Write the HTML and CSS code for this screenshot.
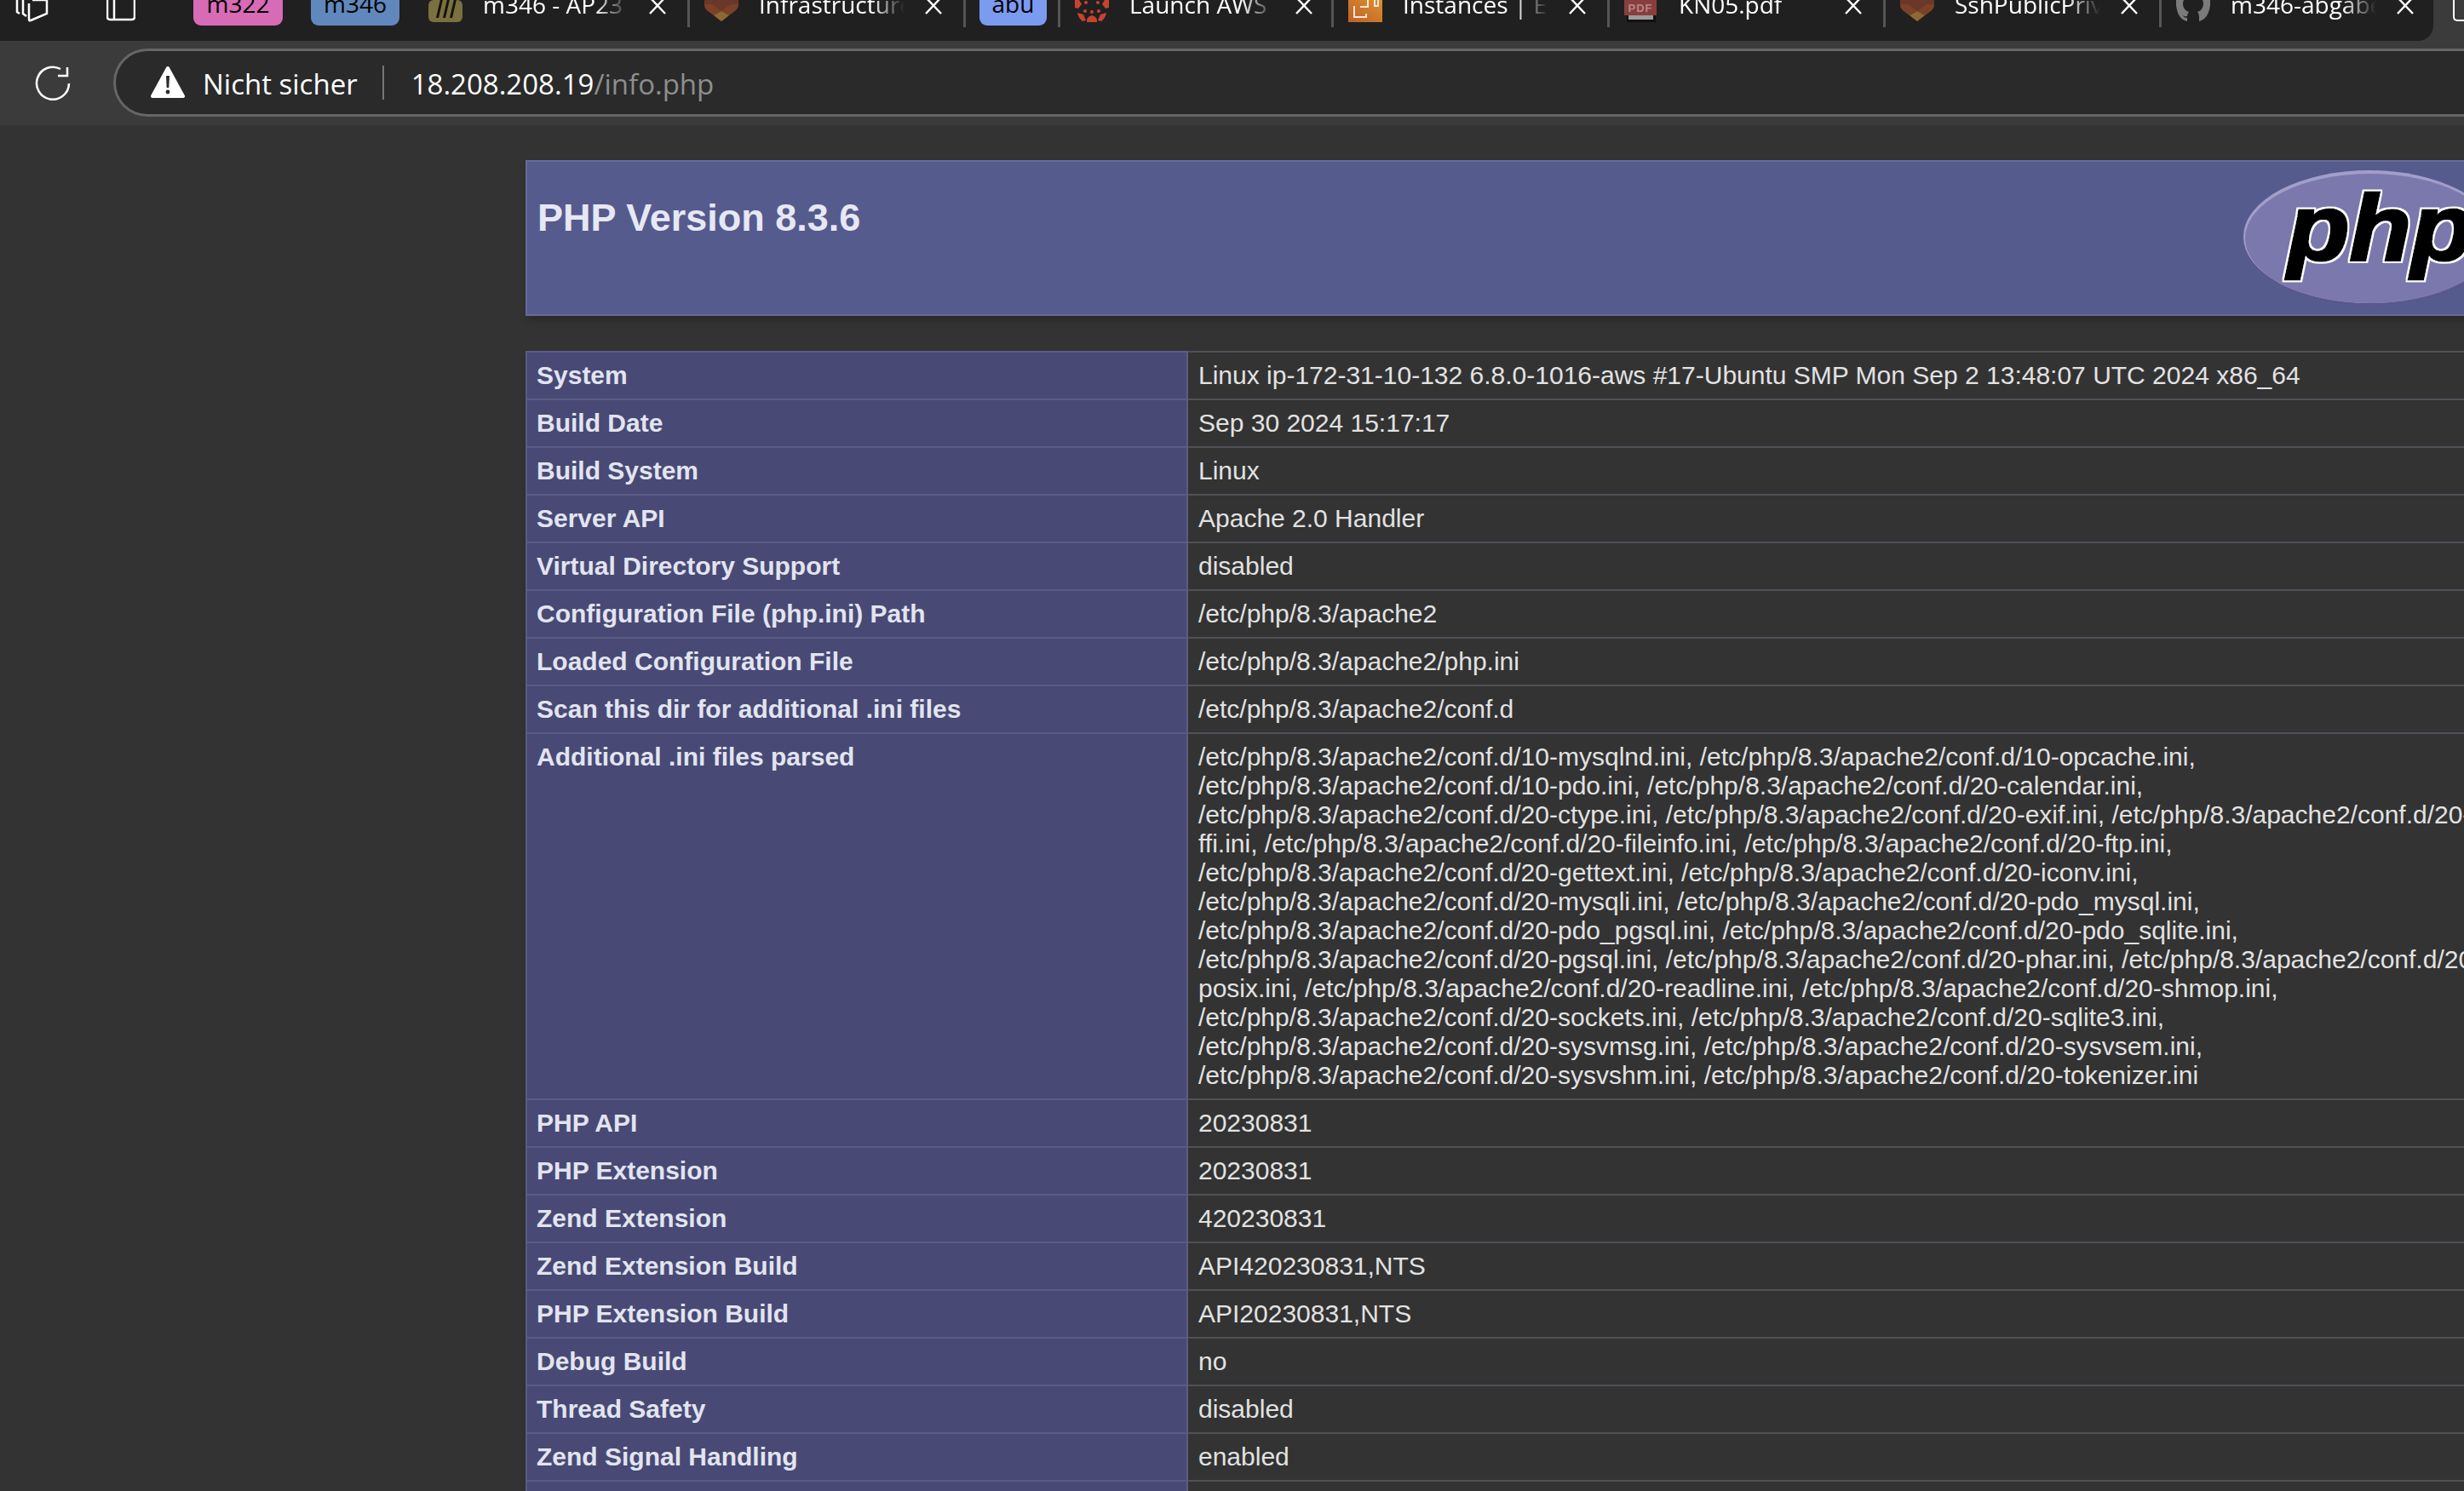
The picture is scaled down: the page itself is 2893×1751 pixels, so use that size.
FILE: index.html
```html
<!DOCTYPE html>
<html lang="de">
<head>
  <meta charset="UTF-8">
  <title>phpinfo()</title>
  <link rel="stylesheet" href="styles.css">
</head>
<body>
  <div class="topbar">
    <div class="tabstrip">
      <svg class="strip-icon icon-workspaces" viewBox="0 0 40 26"><path d="M3 0v14l3 2M10 0v16l4 3M21 0h17v16l-19 8q-2 1-2-2V4"/></svg>
      <svg class="strip-icon icon-vertical" viewBox="0 0 34 26"><path d="M1 0v20q0 3 3 3h26q3 0 3-3V0M9 0v23"/></svg>
      <div class="pin pin-pink">m322</div>
      <div class="pin pin-blue">m346</div>

      <div class="tab">
        <svg class="favicon" viewBox="0 0 40 26"><rect width="40" height="26" y="0" rx="6" fill="#7a7040"/><path d="M9 21l6-26h3l-6 26zM17 21l6-26h3l-6 26zM25 21l6-26h3l-6 26z" fill="#15140c"/></svg>
        <span class="tab-title">m346 - AP23</span>
        <svg class="tab-close" viewBox="0 0 20 20"><path d="M1 0l18 19M19 0L1 19"/></svg>
      </div>
      <div class="tab">
        <svg class="favicon" viewBox="0 0 40 26"><path d="M0 0h40v5q0 4-3 7L20 25 3 12Q0 9 0 5z" fill="#6b3729"/><path d="M20 13l9 5-9 7-9-7z" fill="#8d6a33"/><path d="M0 5q0 4 3 7l8 6 9-5-11-8z" fill="#7b4229"/><path d="M40 5q0 4-3 7l-8 6-9-5 11-8z" fill="#7b4229"/></svg>
        <span class="tab-title">Infrastructure</span>
        <svg class="tab-close" viewBox="0 0 20 20"><path d="M1 0l18 19M19 0L1 19"/></svg>
      </div>
      <div class="pin pin-periwinkle">abu</div>

      <div class="tab">
        <svg class="favicon" viewBox="0 0 40 26"><g fill="#c8432f"><path d="M14 26q-1-6 6-8 7 2 6 8z"/><path d="M3 15l7 2 3 7-4 1q-5-4-6-10z"/><path d="M37 15l-7 2-3 7 4 1q5-4 6-10z"/><path d="M0 0h5l3 5-4 5-4-1z"/><path d="M40 0h-5l-3 5 4 5 4-1z"/><circle cx="12" cy="13" r="2"/><circle cx="28" cy="13" r="2"/><circle cx="20" cy="14" r="2"/><circle cx="13" cy="3" r="2"/><circle cx="27" cy="3" r="2"/></g></svg>
        <span class="tab-title">Launch AWS</span>
        <svg class="tab-close" viewBox="0 0 20 20"><path d="M1 0l18 19M19 0L1 19"/></svg>
      </div>
      <div class="tab">
        <svg class="favicon" viewBox="0 0 40 26"><defs><linearGradient id="awsfill" x1="0" y1="1" x2="1" y2="0"><stop offset="0" stop-color="#bd6029"/><stop offset="1" stop-color="#dc8f2e"/></linearGradient></defs><rect width="40" height="26" fill="url(#awsfill)"/><path d="M8 8H7v12h14v-4M14 8h9v-8M31 0v7h4V0" fill="none" stroke="#f3e6d8" stroke-width="2"/></svg>
        <span class="tab-title">Instances | EC2</span>
        <svg class="tab-close" viewBox="0 0 20 20"><path d="M1 0l18 19M19 0L1 19"/></svg>
      </div>
      <div class="tab">
        <svg class="favicon" viewBox="0 0 40 26"><rect x="3" y="14" width="34" height="12" fill="#111"/><rect x="5" y="18" width="29" height="5" fill="#9b9b9b"/><rect width="38" height="18" fill="#8a3d3d"/><text class="pdf-label" x="19" y="14">PDF</text></svg>
        <span class="tab-title">KN05.pdf</span>
        <svg class="tab-close" viewBox="0 0 20 20"><path d="M1 0l18 19M19 0L1 19"/></svg>
      </div>
      <div class="tab">
        <svg class="favicon" viewBox="0 0 40 26"><path d="M0 0h40v5q0 4-3 7L20 25 3 12Q0 9 0 5z" fill="#6b3729"/><path d="M20 13l9 5-9 7-9-7z" fill="#8d6a33"/><path d="M0 5q0 4 3 7l8 6 9-5-11-8z" fill="#7b4229"/><path d="M40 5q0 4-3 7l-8 6-9-5 11-8z" fill="#7b4229"/></svg>
        <span class="tab-title">SshPublicPrivate</span>
        <svg class="tab-close" viewBox="0 0 20 20"><path d="M1 0l18 19M19 0L1 19"/></svg>
      </div>
      <div class="tab tab-last">
        <svg class="favicon" viewBox="0 0 40 26"><path d="M0 0h9q-2 4 0 9 2 4 6 5-2 2-2 5-4 1-6-2 2 4 6 4v4Q2 23 0 6zM40 0h-9q2 4 0 9-2 4-6 5 2 2 2 5v6q11-3 13-19z" fill="#7b7b7b"/></svg>
        <span class="tab-title">m346-abgabe</span>
        <svg class="tab-close" viewBox="0 0 20 20"><path d="M1 0l18 19M19 0L1 19"/></svg>
      </div>
    </div>
    <div class="strip-end"></div>
  </div>

  <div class="toolbar">
    <svg class="reload" viewBox="0 0 44 44"><path d="M31 5A19 19 0 1 0 41 22M39 3v10H28"/></svg>
    <div class="addressbar">
      <svg class="warn" viewBox="0 0 40 38"><path d="M20 2L38 35H2z" fill="#fff" stroke="#fff" stroke-width="4" stroke-linejoin="round"/><path d="M18 11h4l-.7 14h-2.600z" fill="#2a2a2a"/><circle cx="20" cy="30" r="2.400" fill="#2a2a2a"/></svg>
      <span class="not-secure">Nicht sicher</span>
      <span class="url"><span class="url-host">18.208.208.19</span>/info.php</span>
    </div>
  </div>

  <main class="page">
    <div class="banner">
      <h1>PHP Version 8.3.6</h1>
      <svg class="php-logo" viewBox="0 0 300 160">
        <defs>
          <filter id="halo" x="-10%" y="-10%" width="120%" height="120%">
            <feMorphology in="SourceAlpha" operator="dilate" radius="2" result="grown"/>
            <feFlood flood-color="#fff"/>
            <feComposite in2="grown" operator="in"/>
            <feMerge><feMergeNode/><feMergeNode in="SourceGraphic"/></feMerge>
          </filter>
        </defs>
        <ellipse cx="151" cy="81" rx="149" ry="78" fill="#5a5790"/>
        <ellipse cx="149" cy="78" rx="148" ry="78" fill="#a19fca"/>
        <ellipse cx="150" cy="80" rx="147" ry="76" fill="#7a78ad"/>
        <text class="php-word" transform="translate(53 105) scale(1.08 1)" filter="url(#halo)">php</text>
      </svg>
    </div>

    <table class="info">
      <tr><td class="e">System</td><td class="v">Linux ip-172-31-10-132 6.8.0-1016-aws #17-Ubuntu SMP Mon Sep 2 13:48:07 UTC 2024 x86_64</td></tr>
      <tr><td class="e">Build Date</td><td class="v">Sep 30 2024 15:17:17</td></tr>
      <tr><td class="e">Build System</td><td class="v">Linux</td></tr>
      <tr><td class="e">Server API</td><td class="v">Apache 2.0 Handler</td></tr>
      <tr><td class="e">Virtual Directory Support</td><td class="v">disabled</td></tr>
      <tr><td class="e">Configuration File (php.ini) Path</td><td class="v">/etc/php/8.3/apache2</td></tr>
      <tr><td class="e">Loaded Configuration File</td><td class="v">/etc/php/8.3/apache2/php.ini</td></tr>
      <tr><td class="e">Scan this dir for additional .ini files</td><td class="v">/etc/php/8.3/apache2/conf.d</td></tr>
      <tr><td class="e">Additional .ini files parsed</td><td class="v">/etc/php/8.3/apache2/conf.d/10-mysqlnd.ini, /etc/php/8.3/apache2/conf.d/10-opcache.ini, /etc/php/8.3/apache2/conf.d/10-pdo.ini, /etc/php/8.3/apache2/conf.d/20-calendar.ini, /etc/php/8.3/apache2/conf.d/20-ctype.ini, /etc/php/8.3/apache2/conf.d/20-exif.ini, /etc/php/8.3/apache2/conf.d/20-ffi.ini, /etc/php/8.3/apache2/conf.d/20-fileinfo.ini, /etc/php/8.3/apache2/conf.d/20-ftp.ini, /etc/php/8.3/apache2/conf.d/20-gettext.ini, /etc/php/8.3/apache2/conf.d/20-iconv.ini, /etc/php/8.3/apache2/conf.d/20-mysqli.ini, /etc/php/8.3/apache2/conf.d/20-pdo_mysql.ini, /etc/php/8.3/apache2/conf.d/20-pdo_pgsql.ini, /etc/php/8.3/apache2/conf.d/20-pdo_sqlite.ini, /etc/php/8.3/apache2/conf.d/20-pgsql.ini, /etc/php/8.3/apache2/conf.d/20-phar.ini, /etc/php/8.3/apache2/conf.d/20-posix.ini, /etc/php/8.3/apache2/conf.d/20-readline.ini, /etc/php/8.3/apache2/conf.d/20-shmop.ini, /etc/php/8.3/apache2/conf.d/20-sockets.ini, /etc/php/8.3/apache2/conf.d/20-sqlite3.ini, /etc/php/8.3/apache2/conf.d/20-sysvmsg.ini, /etc/php/8.3/apache2/conf.d/20-sysvsem.ini, /etc/php/8.3/apache2/conf.d/20-sysvshm.ini, /etc/php/8.3/apache2/conf.d/20-tokenizer.ini</td></tr>
      <tr><td class="e">PHP API</td><td class="v">20230831</td></tr>
      <tr><td class="e">PHP Extension</td><td class="v">20230831</td></tr>
      <tr><td class="e">Zend Extension</td><td class="v">420230831</td></tr>
      <tr><td class="e">Zend Extension Build</td><td class="v">API420230831,NTS</td></tr>
      <tr><td class="e">PHP Extension Build</td><td class="v">API20230831,NTS</td></tr>
      <tr><td class="e">Debug Build</td><td class="v">no</td></tr>
      <tr><td class="e">Thread Safety</td><td class="v">disabled</td></tr>
      <tr><td class="e">Zend Signal Handling</td><td class="v">enabled</td></tr>
      <tr><td class="e">Zend Memory Manager</td><td class="v">enabled</td></tr>
    </table>
  </main>
</body>
</html>
```

FILE: styles.css
```css
html, body { margin: 0; height: 1751px; overflow: hidden; }
body { width: 2893px; background: #333; color: #fff; font-family: "Open Sans", sans-serif; }

/* browser chrome */
.topbar { display: flex; height: 48px; overflow: hidden; background: #3b3b3b; }
.tabstrip { flex: none; display: flex; align-items: flex-end; box-sizing: border-box; width: 2857px; height: 48px; padding-bottom: 16px; padding-left: 17px; background: #202020; border-bottom-right-radius: 18px; font-size: 28px; }
.strip-icon { flex: none; height: 26px; margin-bottom: 6px; fill: none; stroke: #fff; stroke-width: 2.5; }
.icon-workspaces { width: 40px; margin-right: 68px; }
.icon-vertical { width: 34px; margin-right: 68px; }

.pin { flex: none; box-sizing: border-box; height: 46px; margin-bottom: 2px; padding-bottom: 5px; line-height: 40px; text-align: center; color: #000; border-radius: 9px; }
.pin-pink { width: 105px; margin-right: 33px; background: #d86bb5; }
.pin-blue { width: 104px; margin-right: 17px; background: #6088bc; }
.pin-periwinkle { width: 79px; margin: 0 16px 2px; background: #7b9bf0; }
.pin-periwinkle + .tab { border-left: 3px solid #555; margin-left: -3px; }

.tab { flex: none; display: flex; align-items: flex-end; box-sizing: border-box; width: 324px; height: 32px; padding-left: 17px; border-right: 3px solid #555; }
.tab-last { border-right: none; }
.favicon { flex: none; width: 40px; height: 26px; margin-bottom: 6px; }
.tab-title { flex: none; width: 176px; margin-left: 24px; margin-bottom: 7px; line-height: 40px; white-space: nowrap; overflow: hidden; -webkit-mask-image: linear-gradient(to right, #000 75%, transparent 97%); mask-image: linear-gradient(to right, #000 75%, transparent 97%); }
.tab-close { flex: none; width: 20px; height: 20px; margin-left: 19px; margin-bottom: 15px; fill: none; stroke: #fff; stroke-width: 2.4; }
.pdf-label { font-family: "Liberation Sans", sans-serif; font-size: 13px; font-weight: 700; letter-spacing: 1px; text-anchor: middle; fill: #b58a8a; }

.strip-end { flex: none; width: 20px; height: 25px; margin-left: 23px; box-sizing: border-box; border: 2.5px solid #fff; border-top: none; border-right: none; border-bottom-left-radius: 5px; }

.toolbar { display: flex; align-items: center; height: 99px; background: #3b3b3b; }
.reload { flex: none; width: 44px; height: 44px; margin-left: 40px; margin-right: 49px; fill: none; stroke: #fff; stroke-width: 2.5; }
.addressbar { display: flex; align-items: center; flex: none; box-sizing: border-box; width: 2900px; height: 80px; margin-top: -1px; margin-right: -140px; padding-left: 41px; background: #2a2a2a; border: 3px solid #666; border-right: none; border-radius: 40px 0 0 40px; font-size: 33px; }
.warn { flex: none; width: 40px; height: 38px; margin-right: 21px; }
.not-secure { height: 40px; padding-right: 29px; border-right: 2px solid #777; line-height: 43px; }
.url { margin-left: 32px; margin-top: 3px; color: #8e8e8e; }
.url-host { color: #fff; }

/* phpinfo */
.page { padding: 41px 0 0 617px; font-family: "Liberation Sans", Arial, sans-serif; font-size: 30px; }
.banner { display: flex; justify-content: space-between; align-items: flex-start; box-sizing: border-box; width: 2335px; height: 183px; margin-bottom: 41px; padding: 0 17px 0 12px; background: #565b8d; border: 2px solid #676a9a; box-shadow: 2px 5px 8px rgba(0, 0, 0, .2); }
.banner h1 { margin: 42px 0 0; font-size: 45px; line-height: 48px; color: #e6e8f4; }
.php-logo { flex: none; width: 300px; height: 160px; margin-top: 10px; }
.php-word { font-family: "Liberation Sans", sans-serif; font-size: 110px; font-weight: 700; font-style: italic; fill: #000; stroke: #000; stroke-width: 3px; }

.info { table-layout: fixed; width: 2335px; border-collapse: collapse; box-shadow: 2px 5px 8px rgba(0, 0, 0, .2); line-height: 34px; }
.info td { padding: 10px 12px; vertical-align: top; border: 2px solid #5a5c84; }
.info .e { width: 751px; padding-left: 11px; background: #484a75; color: #e2e4f0; font-weight: 700; }
.v { background: #333; color: #e2e2e2; }
.info .v { border-color: #505058; border-left-color: #5a5c84; }
```
